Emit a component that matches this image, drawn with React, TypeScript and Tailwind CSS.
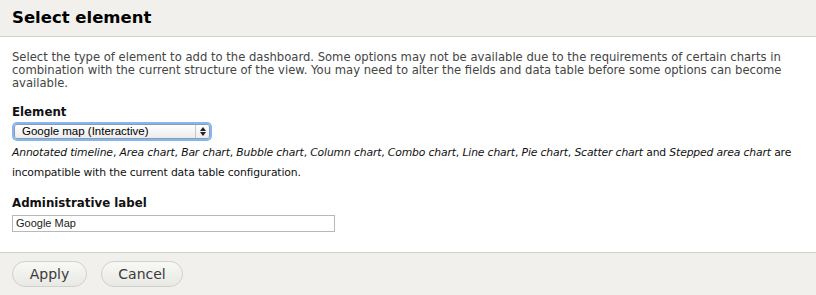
export default function App() {
  return (
    <div className="w-[816px] h-[295px] bg-white flex flex-col font-['DejaVu_Sans',sans-serif] overflow-hidden">
      {/* Title bar */}
      <div className="h-[37px] shrink-0 bg-[#f1f0ec] border-b border-[#cfcfcb] flex items-center px-3">
        <h1 className="text-[16.5px] font-bold text-black">Select element</h1>
      </div>

      {/* Form body */}
      <div className="flex-1 px-3 pt-[14px]">
        <p className="text-[11.6px] leading-[13px] text-[#444]">
          Select the type of element to add to the dashboard. Some options may not be available due to the requirements of certain charts in combination with the current structure of the view. You may need to alter the fields and data table before some options can become available.
        </p>

        <div className="mt-[14px]">
          <label className="block text-[11.8px] font-bold text-[#111] leading-[16px]">Element</label>
          <div className="mt-[4px] w-[196px] h-[15px] ml-[2px] rounded-[3px] border border-[#8a9bb5] bg-gradient-to-b from-white to-[#ececec] shadow-[0_0_0_2px_#86b5f0] flex items-center">
            <span className="flex-1 pl-[7px] font-['Liberation_Sans',sans-serif] text-[11.5px] text-black leading-none">
              Google map (Interactive)
            </span>
            <span className="w-[14px] h-full border-l border-[#c8c8c8] flex flex-col items-center justify-center gap-[1px]">
              <svg width="6" height="4" viewBox="0 0 6 4"><path d="M3 0L6 4H0z" fill="#222" /></svg>
              <svg width="6" height="4" viewBox="0 0 6 4"><path d="M0 0h6L3 4z" fill="#222" /></svg>
            </span>
          </div>
          <p className="mt-[4px] text-[10.8px] tracking-[-0.15px] leading-[20px] text-[#111]">
            <em>Annotated timeline</em>, <em>Area chart</em>, <em>Bar chart</em>, <em>Bubble chart</em>, <em>Column chart</em>, <em>Combo chart</em>, <em>Line chart</em>, <em>Pie chart</em>, <em>Scatter chart</em> and <em>Stepped area chart</em> are incompatible with the current data table configuration.
          </p>
        </div>

        <div className="mt-[12px]">
          <label className="block text-[11.8px] font-bold text-[#111] leading-[16px]">Administrative label</label>
          <div className="mt-[4px] w-[323px] h-[17px] border border-[#b8b8b8] bg-white flex items-center pl-[3px]">
            <span className="font-['Liberation_Sans',sans-serif] text-[11px] text-[#222]">Google Map</span>
          </div>
        </div>
      </div>

      {/* Actions */}
      <div className="h-[43px] shrink-0 bg-[#f1f0ec] border-t border-[#cfcfcb] flex items-center gap-[14px] px-3">
        <button className="h-[26px] w-[75px] rounded-full border border-[#d0d0cc] bg-gradient-to-b from-[#f8f8f6] to-[#e8e8e4] text-[14px] text-[#3a3a3a]">
          Apply
        </button>
        <button className="h-[26px] w-[82px] rounded-full border border-[#d0d0cc] bg-gradient-to-b from-[#f8f8f6] to-[#e8e8e4] text-[14px] text-[#3a3a3a]">
          Cancel
        </button>
      </div>
    </div>
  );
}
